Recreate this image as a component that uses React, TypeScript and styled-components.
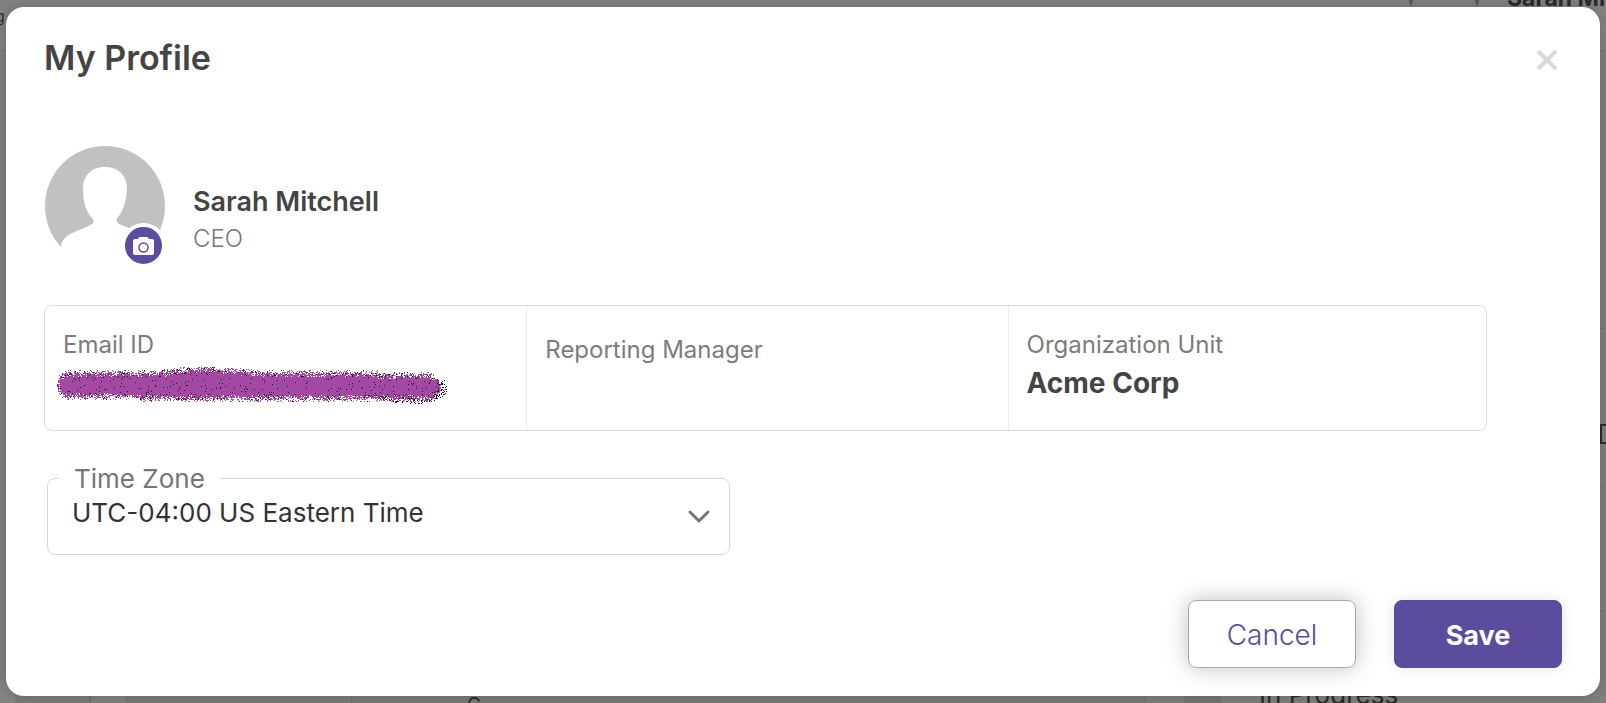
import React from "react";
import styled, { createGlobalStyle } from "styled-components";

const GlobalStyle = createGlobalStyle`
  * { box-sizing: border-box; }
  body { margin: 0; background: #808080; }
  body, button, select { font-family: Inter, "Open Sans", sans-serif; }
`;

const Screen = styled.div`
  display: grid;
  grid-template-columns: minmax(0, 1fr);
  min-height: 100vh;
`;

/* Dimmed dashboard behind the dialog */
const Backdrop = styled.div`
  grid-area: 1 / 1;
  display: flex;
  flex-direction: column;
  height: 100vh;
  overflow: hidden;
  background: #808080;
  color: #2b2b2b;
`;

const TopBar = styled.div`
  display: flex;
  justify-content: space-between;
  flex: none;
  height: 51px;
  border-bottom: 1px solid #747474;
  background: #838383;
`;

const Brand = styled.span`
  margin-left: -5px;
  font-size: 16px;
  line-height: 32px;
  color: #333338;
`;

const Account = styled.div`
  display: flex;
  gap: 52px;
  margin-top: -13px;
  height: 24px;
  white-space: nowrap;
`;

const AccountName = styled.span`
  width: 99px;
  margin-left: -29px;
  overflow: hidden;
  font-size: 23px;
  font-weight: 700;
  line-height: 22px;
`;

const MarkerIcon = styled.svg`
  width: 14px;
  height: 20px;
  fill: #5c5c5c;
`;

const Rail = styled.div`
  display: flex;
  flex-direction: column;
  align-items: flex-end;
  flex: 1;
`;

const RailRow = styled.div<{ $height: number }>`
  flex: none;
  width: 40px;
  height: ${(p) => p.$height}px;
  border-bottom: 1px solid #747474;
`;

const RailCell = styled.div`
  width: 6px;
  height: 20px;
  margin: 95px 0 0 34px;
  border: 2px solid #2a2e33;
  border-right: 0;
`;

const Board = styled.div`
  display: grid;
  grid-template-columns: 15fr 76fr 36fr 225fr 794fr 38fr 37fr 385fr;
  flex: none;
  height: 22px;
  overflow: hidden;
  white-space: nowrap;
  font-size: 26px;
  line-height: 28px;
`;

const Column = styled.div<{ $pad?: number; $tone: string; $line?: string }>`
  min-width: 0;
  padding-left: ${(p) => p.$pad ?? 0}px;
  border-right: 1px solid ${(p) => p.$line ?? p.$tone};
  background: ${(p) => p.$tone};
`;

const Lower = styled.span`
  display: block;
  margin-top: 10px;
  font-size: 19px;
`;

const Overlay = styled.div`
  grid-area: 1 / 1;
  z-index: 1;
  padding: 7px 6px;
`;

const Dialog = styled.form`
  padding: 32px 38px 28px;
  border-radius: 18px;
  background: #fff;
  box-shadow: 0 0 16px rgba(0, 0, 0, 0.2);
`;

const DialogHeader = styled.header`
  display: flex;
  justify-content: space-between;
  align-items: flex-start;
  height: 40px;
`;

const Title = styled.h1`
  margin: 0;
  font-size: 34px;
  line-height: 38px;
  font-weight: 600;
  color: #444;
`;

const CloseButton = styled.button`
  display: flex;
  margin: 10px 4px 0 0;
  padding: 0;
  border: 0;
  background: none;
  color: #d9d9d9;
  cursor: pointer;
`;

const Profile = styled.section`
  display: flex;
  align-items: center;
  gap: 28px;
  margin: 67px 0 0 1px;
`;

const Avatar = styled.div`
  position: relative;
  width: 120px;
  height: 120px;
`;

const PhotoButton = styled.button`
  position: absolute;
  right: -1px;
  bottom: -2px;
  display: flex;
  align-items: center;
  justify-content: center;
  width: 45px;
  height: 45px;
  padding: 0;
  border: 4px solid #fff;
  border-radius: 50%;
  background: #5b4c9e;
  cursor: pointer;
`;

const Identity = styled.div`
  padding-top: 30px;
`;

const Name = styled.h2`
  margin: 0;
  font-size: 27px;
  line-height: 36px;
  font-weight: 600;
  color: #444;
`;

const Role = styled.p`
  margin: 0;
  font-size: 24px;
  line-height: 38px;
  font-weight: 300;
  color: #777;
`;

const Details = styled.dl`
  display: grid;
  grid-template-columns: 33.4% 33.4% 1fr;
  height: 126px;
  margin: 39px 75px 0 0;
  border: 1px solid #ddd;
  border-radius: 8px;
`;

const Detail = styled.div<{ $padTop: number }>`
  padding: ${(p) => p.$padTop}px 18px 0;
  & + & { border-left: 1px solid #ececec; }
`;

const Label = styled.dt`
  font-size: 24px;
  line-height: 36px;
  color: #7c7c7c;
  font-weight: 400;
`;

const Value = styled.dd`
  margin: 0;
  font-size: 28px;
  line-height: 40px;
  font-weight: 700;
  color: #444;
`;

const RedactedValue = styled.dd`
  margin: 4px 0 0 -6px;
`;

const Redaction = styled.svg`
  display: block;
`;

const ZoneField = styled.fieldset`
  width: 45%;
  min-width: 0;
  margin: 32px 0 0 3px;
  padding: 0 0 24px;
  border: 1px solid #d6d6d6;
  border-radius: 8px;
`;

const ZoneLegend = styled.legend`
  margin-left: 11px;
  padding: 1px 15px 0;
  font-size: 26px;
  line-height: 30px;
  color: #757575;
`;

const SelectWrap = styled.div`
  position: relative;
`;

const ZoneSelect = styled.select`
  display: block;
  appearance: none;
  width: 100%;
  height: 36px;
  padding: 0 60px 0 24px;
  border: 0;
  background: none;
  font-size: 26px;
  color: #333;
`;

const Chevron = styled.svg`
  position: absolute;
  right: 18px;
  top: 15px;
  pointer-events: none;
`;

const Actions = styled.footer`
  display: flex;
  justify-content: flex-end;
  gap: 38px;
  margin-top: 45px;
`;

const ActionButton = styled.button<{ $primary?: boolean }>`
  width: 168px;
  height: 68px;
  padding: 2px 0 0;
  border: 1px solid ${(p) => (p.$primary ? "#5b4c9e" : "#aaa")};
  border-radius: 8px;
  background: ${(p) => (p.$primary ? "#5b4c9e" : "#fff")};
  box-shadow: ${(p) =>
    p.$primary ? "0 0 14px rgba(0, 0, 0, 0.1)" : "0 0 22px rgba(0, 0, 0, 0.25)"};
  color: ${(p) => (p.$primary ? "#fff" : "#5b4c9e")};
  font-size: ${(p) => (p.$primary ? 27 : 28)}px;
  font-weight: ${(p) => (p.$primary ? 700 : 300)};
  cursor: pointer;
`;

/* Spray-brush stroke that hides the address: dense core, speckled edge */
function sprayStroke() {
  let seed = 7;
  const rand = () => {
    seed = (seed * 1664525 + 1013904223) >>> 0;
    return seed / 4294967296;
  };
  let ink = "";
  let black = "";
  for (let x = 0; x < 390; x++) {
    const cap = x < 11 ? 11 - Math.sqrt(121 - (11 - x) ** 2) : 0;
    const tail = x > 371 ? Math.min(14, ((x - 371) / 13) ** 2 * 12) : 0;
    const bump = Math.max(0, 5 - Math.abs(x - 149) / 10);
    const slope = x > 320 ? 2 : 0;
    const top = 3 - bump + slope + cap + tail;
    const bottom = 34 - (x < 80 ? 2 : 0) - cap - tail;
    for (let y = 0; y < 38; y++) {
      const depth = Math.min(y - top, bottom - y, (x + 2) * 1.2);
      const px = `M${x} ${y}h1v1h-1z`;
      const edge = Math.max(0, Math.min(1, (depth + 1) / 8));
      if (x < 384 && depth > -1 && rand() < Math.pow(edge, 0.9)) {
        if (rand() < (depth < 8 ? 0.06 : 0.03)) black += px;
        else ink += px;
      } else if (depth > 1 && x < 384 && rand() < 0.1) {
        black += px;
      } else if (x > 325 && y > 12) {
        const d = Math.hypot((x - 354) / 35, (y - 20) / 16);
        if (d < 1.05 && rand() < 0.3) black += px;
      }
    }
  }
  return { ink, black };
}

const stroke = sprayStroke();

export default function App() {
  return (
    <>
      <GlobalStyle />
      <Screen>
        <Backdrop aria-hidden="true">
          <TopBar>
            <Brand>g n</Brand>
            <Account>
              <MarkerIcon viewBox="0 0 14 20"><path d="M0 0h14L7 20z" /></MarkerIcon>
              <MarkerIcon viewBox="0 0 14 20"><path d="M0 0h14L7 20z" /></MarkerIcon>
              <AccountName>Sarah Mitchell</AccountName>
            </Account>
          </TopBar>
          <Rail>
            <RailRow $height={278} />
            <RailRow $height={158}>
              <RailCell />
            </RailRow>
            <RailRow $height={125} />
          </Rail>
          <Board>
            <Column $tone="#848484" />
            <Column $tone="#7c7c7c" $line="#6e6e6e" />
            <Column $tone="#828282" $line="#747474" />
            <Column $tone="#7b7b7b" $line="#717171" />
            <Column $pad={115} $tone="#7b7b7b" $line="#717171">
              <Lower>C</Lower>
            </Column>
            <Column $tone="#808080" />
            <Column $tone="#757575" />
            <Column $pad={38} $tone="#808080">In Progress</Column>
          </Board>
        </Backdrop>

        <Overlay>
          <Dialog role="dialog" aria-labelledby="dialog-title" onSubmit={(e) => e.preventDefault()}>
            <DialogHeader>
              <Title id="dialog-title">My Profile</Title>
              <CloseButton type="button" aria-label="Close">
                <svg width="22" height="22" viewBox="0 0 22 22" stroke="currentColor" strokeWidth="4">
                  <path d="M2 2l18 18M20 2L2 20" />
                </svg>
              </CloseButton>
            </DialogHeader>

            <Profile>
              <Avatar>
                <svg width="120" height="120" viewBox="0 0 120 120" role="img" aria-label="Profile photo">
                  <path
                    fill="#c1c1c1"
                    d="M16 101C6 90 0 76 0 60a60 60 0 0 1 120 0c0 16-6 30-16 41c0-7-4-11-9-14c-7-4-15-6-21-9c-2-1-3-4-2-6c7-7 9-18 10-29c0-14-9-22-22-22s-22 8-22 22c0 13 3 23 10 30c1 2 1 4-1 5c-6 4-14 6-22 10c-5 3-9 7-9 14z"
                  />
                </svg>
                <PhotoButton type="button" aria-label="Change photo">
                  <svg width="21" height="18" viewBox="0 0 21 18">
                    <path
                      fill="#fff"
                      d="M2 2h3l.6-1q.4-1 1.400-1h7q1 0 1.400 1l.6 1h3q2 0 2 2v12q0 2-2 2H2q-2 0-2-2V4q0-2 2-2z"
                    />
                    <circle cx="10.500" cy="10.500" r="4.500" fill="#fff" stroke="#5b4c9e" strokeWidth="1.500" />
                  </svg>
                </PhotoButton>
              </Avatar>
              <Identity>
                <Name>Sarah Mitchell</Name>
                <Role>CEO</Role>
              </Identity>
            </Profile>

            <Details>
              <Detail $padTop={21}>
                <Label>Email ID</Label>
                <RedactedValue>
                  <Redaction width="392" height="38" shapeRendering="crispEdges" role="img" aria-label="Hidden">
                    <path d={stroke.ink} fill="#a349a4" />
                    <path d={stroke.black} fill="#1c1420" />
                  </Redaction>
                </RedactedValue>
              </Detail>
              <Detail $padTop={26}>
                <Label>Reporting Manager</Label>
              </Detail>
              <Detail $padTop={21}>
                <Label>Organization Unit</Label>
                <Value>Acme Corp</Value>
              </Detail>
            </Details>

            <ZoneField>
              <ZoneLegend>
                <label htmlFor="time-zone">Time Zone</label>
              </ZoneLegend>
              <SelectWrap>
                <ZoneSelect id="time-zone">
                  <option>UTC-04:00 US Eastern Time</option>
                </ZoneSelect>
                <Chevron width="24" height="16" viewBox="0 0 24 16" fill="none" stroke="#757575" strokeWidth="3" strokeLinecap="round" strokeLinejoin="round">
                  <path d="M3 3l9 9l9-9" />
                </Chevron>
              </SelectWrap>
            </ZoneField>

            <Actions>
              <ActionButton type="button">Cancel</ActionButton>
              <ActionButton type="submit" $primary>Save</ActionButton>
            </Actions>
          </Dialog>
        </Overlay>
      </Screen>
    </>
  );
}
